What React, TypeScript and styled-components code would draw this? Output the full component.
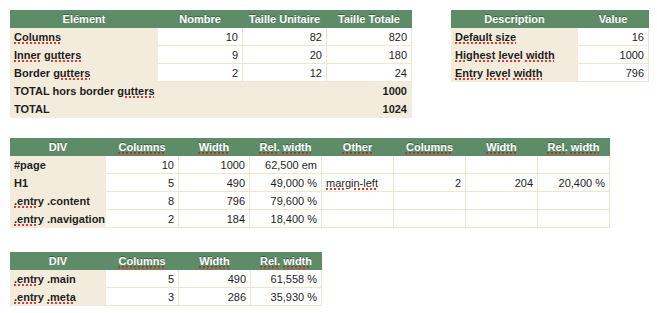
import React from "react";
import styled, { createGlobalStyle } from "styled-components";

const GlobalStyle = createGlobalStyle`
  html, body {
    margin: 0;
    padding: 0;
    background: #fff;
  }
  body {
    font-family: "Liberation Sans", Arial, sans-serif;
    font-size: 11px;
    color: #1e1e1e;
  }
`;

const GREEN = "#5f8c68";
const BEIGE = "#f3ecdc";
const LINE = "#efe6d2";

const Page = styled.div`
  padding: 10px 0 0 10px;
  display: flex;
  flex-direction: column;
  align-items: flex-start;
`;

const TopRow = styled.div`
  display: flex;
  gap: 39px;
  align-items: flex-start;
`;

const Block = styled.div<{ $mt?: number }>`
  margin-top: ${({ $mt }) => $mt ?? 0}px;
`;

const Sheet = styled.table`
  border-collapse: collapse;
  table-layout: fixed;
  border: 1px solid ${LINE};
`;

const Head = styled.th`
  background: ${GREEN};
  color: #fff;
  font-weight: bold;
  font-size: 11px;
  height: 16px;
  padding: 0 3px;
  text-align: center;
  text-shadow: 0 -1px 0 rgba(0, 0, 0, 0.35);
  border: 1px solid ${GREEN};
  white-space: nowrap;
`;

const Label = styled.td`
  background: ${BEIGE};
  font-weight: bold;
  height: 17px;
  padding: 0 3px;
  text-align: left;
  white-space: nowrap;
  overflow: visible;
  border: 1px solid ${BEIGE};
`;

const Num = styled.td<{ $bold?: boolean; $beige?: boolean }>`
  background: ${({ $beige }) => ($beige ? BEIGE : "#fff")};
  font-weight: ${({ $bold }) => ($bold ? "bold" : "normal")};
  height: 17px;
  padding: 0 4px;
  text-align: right;
  white-space: nowrap;
  border: 1px solid ${({ $beige }) => ($beige ? BEIGE : LINE)};
`;

const Txt = styled.td`
  background: #fff;
  height: 17px;
  padding: 0 4px;
  text-align: left;
  white-space: nowrap;
  border: 1px solid ${LINE};
`;

// spell-check squiggle under words
const Sp = styled.span`
  text-decoration: underline dotted #e23a30;
  text-decoration-thickness: 2px;
  text-underline-offset: 2px;
`;

const Col = styled.col<{ $w: number }>`
  width: ${({ $w }) => $w}px;
`;

const Cols = ({ widths }: { widths: number[] }) => (
  <colgroup>
    {widths.map((w, i) => (
      <Col key={i} $w={w} />
    ))}
  </colgroup>
);

export default function App() {
  return (
    <>
      <GlobalStyle />
      <Page>
        <TopRow>
          <Sheet style={{ width: 401 }}>
            <Cols widths={[147, 85, 84, 85]} />
            <thead>
              <tr>
                <Head>Elément</Head>
                <Head>Nombre</Head>
                <Head>Taille Unitaire</Head>
                <Head>Taille Totale</Head>
              </tr>
            </thead>
            <tbody>
              <tr>
                <Label><Sp>Columns</Sp></Label>
                <Num>10</Num>
                <Num>82</Num>
                <Num>820</Num>
              </tr>
              <tr>
                <Label><Sp>Inner</Sp> <Sp>gutters</Sp></Label>
                <Num>9</Num>
                <Num>20</Num>
                <Num>180</Num>
              </tr>
              <tr>
                <Label>Border <Sp>gutters</Sp></Label>
                <Num>2</Num>
                <Num>12</Num>
                <Num>24</Num>
              </tr>
              <tr>
                <Label>TOTAL hors border <Sp>gutters</Sp></Label>
                <Num $beige />
                <Num $beige />
                <Num $beige $bold>1000</Num>
              </tr>
              <tr>
                <Label>TOTAL</Label>
                <Num $beige />
                <Num $beige />
                <Num $beige $bold>1024</Num>
              </tr>
            </tbody>
          </Sheet>

          <Sheet style={{ width: 197 }}>
            <Cols widths={[126, 71]} />
            <thead>
              <tr>
                <Head>Description</Head>
                <Head>Value</Head>
              </tr>
            </thead>
            <tbody>
              <tr>
                <Label><Sp>Default size</Sp></Label>
                <Num>16</Num>
              </tr>
              <tr>
                <Label><Sp>Highest</Sp> <Sp>level</Sp> <Sp>width</Sp></Label>
                <Num>1000</Num>
              </tr>
              <tr>
                <Label><Sp>Entry</Sp> <Sp>level</Sp> <Sp>width</Sp></Label>
                <Num>796</Num>
              </tr>
            </tbody>
          </Sheet>
        </TopRow>

        <Block $mt={20}>
          <Sheet style={{ width: 599 }}>
            <Cols widths={[95, 73, 71, 72, 72, 72, 72, 72]} />
            <thead>
              <tr>
                <Head>DIV</Head>
                <Head><Sp>Columns</Sp></Head>
                <Head><Sp>Width</Sp></Head>
                <Head><Sp>Rel.</Sp> <Sp>width</Sp></Head>
                <Head><Sp>Other</Sp></Head>
                <Head><Sp>Columns</Sp></Head>
                <Head><Sp>Width</Sp></Head>
                <Head><Sp>Rel.</Sp> <Sp>width</Sp></Head>
              </tr>
            </thead>
            <tbody>
              <tr>
                <Label>#page</Label>
                <Num>10</Num>
                <Num>1000</Num>
                <Num>62,500 em</Num>
                <Txt />
                <Num />
                <Num />
                <Num />
              </tr>
              <tr>
                <Label>H1</Label>
                <Num>5</Num>
                <Num>490</Num>
                <Num>49,000 %</Num>
                <Txt><Sp>margin-left</Sp></Txt>
                <Num>2</Num>
                <Num>204</Num>
                <Num>20,400 %</Num>
              </tr>
              <tr>
                <Label><Sp>.entry</Sp> .content</Label>
                <Num>8</Num>
                <Num>796</Num>
                <Num>79,600 %</Num>
                <Txt />
                <Num />
                <Num />
                <Num />
              </tr>
              <tr>
                <Label><Sp>.entry</Sp> .navigation</Label>
                <Num>2</Num>
                <Num>184</Num>
                <Num>18,400 %</Num>
                <Txt />
                <Num />
                <Num />
                <Num />
              </tr>
            </tbody>
          </Sheet>
        </Block>

        <Block $mt={24}>
          <Sheet style={{ width: 311 }}>
            <Cols widths={[95, 73, 72, 71]} />
            <thead>
              <tr>
                <Head>DIV</Head>
                <Head><Sp>Columns</Sp></Head>
                <Head><Sp>Width</Sp></Head>
                <Head><Sp>Rel.</Sp> <Sp>width</Sp></Head>
              </tr>
            </thead>
            <tbody>
              <tr>
                <Label><Sp>.entry</Sp> .main</Label>
                <Num>5</Num>
                <Num>490</Num>
                <Num>61,558 %</Num>
              </tr>
              <tr>
                <Label><Sp>.entry</Sp> <Sp>.meta</Sp></Label>
                <Num>3</Num>
                <Num>286</Num>
                <Num>35,930 %</Num>
              </tr>
            </tbody>
          </Sheet>
        </Block>
      </Page>
    </>
  );
}
